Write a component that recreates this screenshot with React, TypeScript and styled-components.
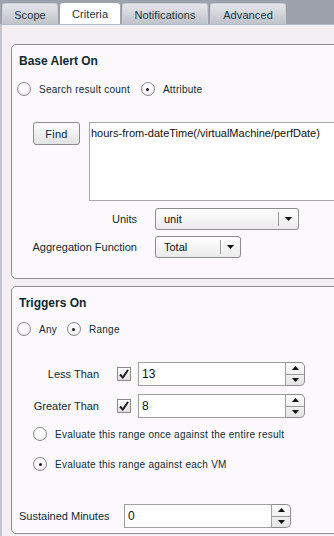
import React from "react";
import styled, { createGlobalStyle } from "styled-components";

const Global = createGlobalStyle`
  html, body { margin: 0; padding: 0; }
  body { font-family: "Liberation Sans", Arial, sans-serif; font-size: 11px; color: #0c2c36; }
`;

const Page = styled.div`
  width: 334px;
  height: 536px;
  overflow: hidden;
  background: #f3eff3;
  display: flex;
  flex-direction: column;
`;

const TabBar = styled.div`
  height: 24px;
  flex: none;
  background: #9da1ab;
  display: flex;
  align-items: flex-end;
  padding-left: 2px;
  gap: 2px;
  border-bottom: 1px solid #b8b8c2;
`;

const Tab = styled.div<{ $active?: boolean; $w: number }>`
  width: ${(p) => p.$w}px;
  height: 21px;
  box-sizing: border-box;
  display: flex;
  align-items: center;
  justify-content: center;
  font-size: 11px;
  letter-spacing: 0.1px;
  color: #173640;
  border-radius: 3px 3px 0 0;
  background: ${(p) =>
    p.$active ? "#ffffff" : "linear-gradient(#e4e6ea, #bfc3ca)"};
  border: ${(p) => (p.$active ? "none" : "1px solid #c9ccd2")};
  border-bottom: none;
  padding-top: 1px;
`;

const Content = styled.div`
  flex: 1;
  border-left: 2px solid #c3c3cb;
  padding: 19px 0 0 9px;
  display: flex;
  flex-direction: column;
  gap: 7px;
`;

const Panel = styled.div<{ $h: number }>`
  height: ${(p) => p.$h}px;
  box-sizing: border-box;
  margin-right: -20px;
  border: 1px solid #8e8e92;
  border-radius: 5px;
  background: #fcf9fc;
  display: flex;
  flex-direction: column;
  flex: none;
`;

const Title = styled.div`
  font-weight: bold;
  font-size: 12px;
  color: #0c2a33;
  padding: 9px 0 0 7px;
  height: 15px;
  line-height: 15px;
`;

const Row = styled.div<{ $mt: number; $pl?: number; $gap?: number; $h?: number }>`
  display: flex;
  align-items: center;
  margin-top: ${(p) => p.$mt}px;
  padding-left: ${(p) => p.$pl ?? 5}px;
  gap: ${(p) => p.$gap ?? 8}px;
  height: ${(p) => p.$h ?? 16}px;
`;

const RadioItem = styled.label`
  display: flex;
  align-items: center;
  gap: 8px;
  font-size: 10px;
  letter-spacing: 0.25px;
  color: #0c2c36;
`;

const RadioCircle = styled.span<{ $on?: boolean }>`
  width: 14px;
  height: 14px;
  box-sizing: border-box;
  border-radius: 50%;
  border: 1px solid #8c8c8c;
  background: radial-gradient(circle at 50% 35%, #ffffff 40%, #dcdcdc 100%);
  display: flex;
  align-items: center;
  justify-content: center;
  flex: none;
  &::after {
    content: "";
    width: 3px;
    height: 3px;
    border-radius: 50%;
    background: #1a1a1a;
    display: ${(p) => (p.$on ? "block" : "none")};
  }
`;

const FindButton = styled.button`
  width: 47px;
  height: 23px;
  box-sizing: border-box;
  border: 1px solid #8c8c8c;
  border-radius: 3px;
  background: linear-gradient(#ffffff, #e2e2e2);
  font-family: "Liberation Sans", Arial, sans-serif;
  font-size: 11px;
  letter-spacing: 0.3px;
  color: #0c2c36;
  padding: 0;
  flex: none;
`;

const TextArea = styled.div`
  flex: 1;
  height: 79px;
  box-sizing: border-box;
  border: 1px solid #a8a8a8;
  border-right: none;
  background: #ffffff;
  font-size: 11px;
  color: #101010;
  padding: 4px 0 0 1px;
  white-space: nowrap;
`;

const FindRow = styled.div`
  display: flex;
  align-items: flex-start;
  gap: 9px;
  margin-top: 25px;
  padding-left: 21px;
`;

const FieldRow = styled.div<{ $mt: number }>`
  display: flex;
  align-items: center;
  margin-top: ${(p) => p.$mt}px;
  height: 22px;
`;

const Label = styled.div<{ $w: number; $left?: boolean }>`
  width: ${(p) => p.$w}px;
  text-align: ${(p) => (p.$left ? "left" : "right")};
  padding-left: ${(p) => (p.$left ? 7 : 0)}px;
  font-size: 11px;
  white-space: nowrap;
  color: #0c2c36;
  flex: none;
`;

const Select = styled.div<{ $w: number; $ml: number }>`
  width: ${(p) => p.$w}px;
  margin-left: ${(p) => p.$ml}px;
  height: 22px;
  box-sizing: border-box;
  border: 1px solid #8c8c8c;
  border-radius: 3px;
  background: linear-gradient(#ffffff, #ebebeb);
  display: flex;
  align-items: center;
  font-size: 11px;
  color: #101010;
`;

const SelectValue = styled.div`
  flex: 1;
  padding-left: 8px;
`;

const SelectArrow = styled.div`
  width: 19px;
  height: 14px;
  border-left: 1px solid #9a9a9a;
  display: flex;
  align-items: center;
  justify-content: center;
`;

const Check = styled.span`
  width: 14px;
  height: 14px;
  box-sizing: border-box;
  border: 1px solid #8c8c8c;
  background: linear-gradient(#ffffff, #dedede);
  display: flex;
  align-items: center;
  justify-content: center;
  flex: none;
`;

const Spin = styled.div<{ $ml: number }>`
  display: flex;
  margin-left: ${(p) => p.$ml}px;
  height: 24px;
  flex: none;
`;

const SpinInput = styled.div<{ $w: number }>`
  width: ${(p) => p.$w}px;
  box-sizing: border-box;
  border: 1px solid #a0a0a0;
  background: #ffffff;
  font-size: 12px;
  color: #101010;
  display: flex;
  align-items: center;
  padding-left: 3px;
`;

const SpinButtons = styled.div`
  width: 19px;
  box-sizing: border-box;
  border: 1px solid #8c8c8c;
  border-left: none;
  border-radius: 0 5px 5px 0;
  background: linear-gradient(#ffffff, #e4e4e4);
  display: flex;
  flex-direction: column;
`;

const SpinHalf = styled.div<{ $top?: boolean }>`
  flex: 1;
  display: flex;
  align-items: center;
  justify-content: center;
  border-bottom: ${(p) => (p.$top ? "1px solid #9a9a9a" : "none")};
`;

const Arrow = ({ up }: { up?: boolean }) => (
  <svg width="7" height="4" viewBox="0 0 7 4">
    <polygon points={up ? "0,4 7,4 3.5,0" : "0,0 7,0 3.5,4"} fill="#111" />
  </svg>
);

const CheckMark = () => (
  <svg width="10" height="10" viewBox="0 0 10 10">
    <path d="M1 5.5 L3.8 8.5 L9 1" stroke="#1c1c24" strokeWidth="2" fill="none" />
  </svg>
);

const Spinner = ({ value, w, ml }: { value: string; w: number; ml: number }) => (
  <Spin $ml={ml}>
    <SpinInput $w={w}>{value}</SpinInput>
    <SpinButtons>
      <SpinHalf $top>
        <Arrow up />
      </SpinHalf>
      <SpinHalf>
        <Arrow />
      </SpinHalf>
    </SpinButtons>
  </Spin>
);

export default function App() {
  return (
    <Page>
      <Global />
      <TabBar>
        <Tab $w={56}>Scope</Tab>
        <Tab $w={60} $active>
          Criteria
        </Tab>
        <Tab $w={86}>Notifications</Tab>
        <Tab $w={76}>Advanced</Tab>
      </TabBar>
      <Content>
        <Panel $h={235}>
          <Title>Base Alert On</Title>
          <Row $mt={12} $gap={11}>
            <RadioItem>
              <RadioCircle />
              Search result count
            </RadioItem>
            <RadioItem>
              <RadioCircle $on />
              Attribute
            </RadioItem>
          </Row>
          <FindRow>
            <FindButton>Find</FindButton>
            <TextArea>hours-from-dateTime(/virtualMachine/perfDate)</TextArea>
          </FindRow>
          <FieldRow $mt={7}>
            <Label $w={125}>Units</Label>
            <Select $w={144} $ml={18}>
              <SelectValue>unit</SelectValue>
              <SelectArrow>
                <Arrow />
              </SelectArrow>
            </Select>
          </FieldRow>
          <FieldRow $mt={6}>
            <Label $w={125}>Aggregation Function</Label>
            <Select $w={86} $ml={18}>
              <SelectValue>Total</SelectValue>
              <SelectArrow>
                <Arrow />
              </SelectArrow>
            </Select>
          </FieldRow>
        </Panel>
        <Panel $h={248}>
          <Title>Triggers On</Title>
          <Row $mt={10} $gap={10}>
            <RadioItem>
              <RadioCircle />
              Any
            </RadioItem>
            <RadioItem>
              <RadioCircle $on />
              Range
            </RadioItem>
          </Row>
          <FieldRow $mt={26}>
            <Label $w={87}>Less Than</Label>
            <Row $mt={0} $pl={18} $gap={7} $h={24}>
              <Check>
                <CheckMark />
              </Check>
              <Spinner value="13" w={148} ml={0} />
            </Row>
          </FieldRow>
          <FieldRow $mt={10}>
            <Label $w={87}>Greater Than</Label>
            <Row $mt={0} $pl={18} $gap={7} $h={24}>
              <Check>
                <CheckMark />
              </Check>
              <Spinner value="8" w={148} ml={0} />
            </Row>
          </FieldRow>
          <Row $mt={9} $pl={21}>
            <RadioItem>
              <RadioCircle />
              Evaluate this range once against the entire result
            </RadioItem>
          </Row>
          <Row $mt={14} $pl={21}>
            <RadioItem>
              <RadioCircle $on />
              Evaluate this range against each VM
            </RadioItem>
          </Row>
          <FieldRow $mt={33}>
            <Label $w={105} $left>
              Sustained Minutes
            </Label>
            <Spinner value="0" w={148} ml={0} />
          </FieldRow>
        </Panel>
      </Content>
    </Page>
  );
}
